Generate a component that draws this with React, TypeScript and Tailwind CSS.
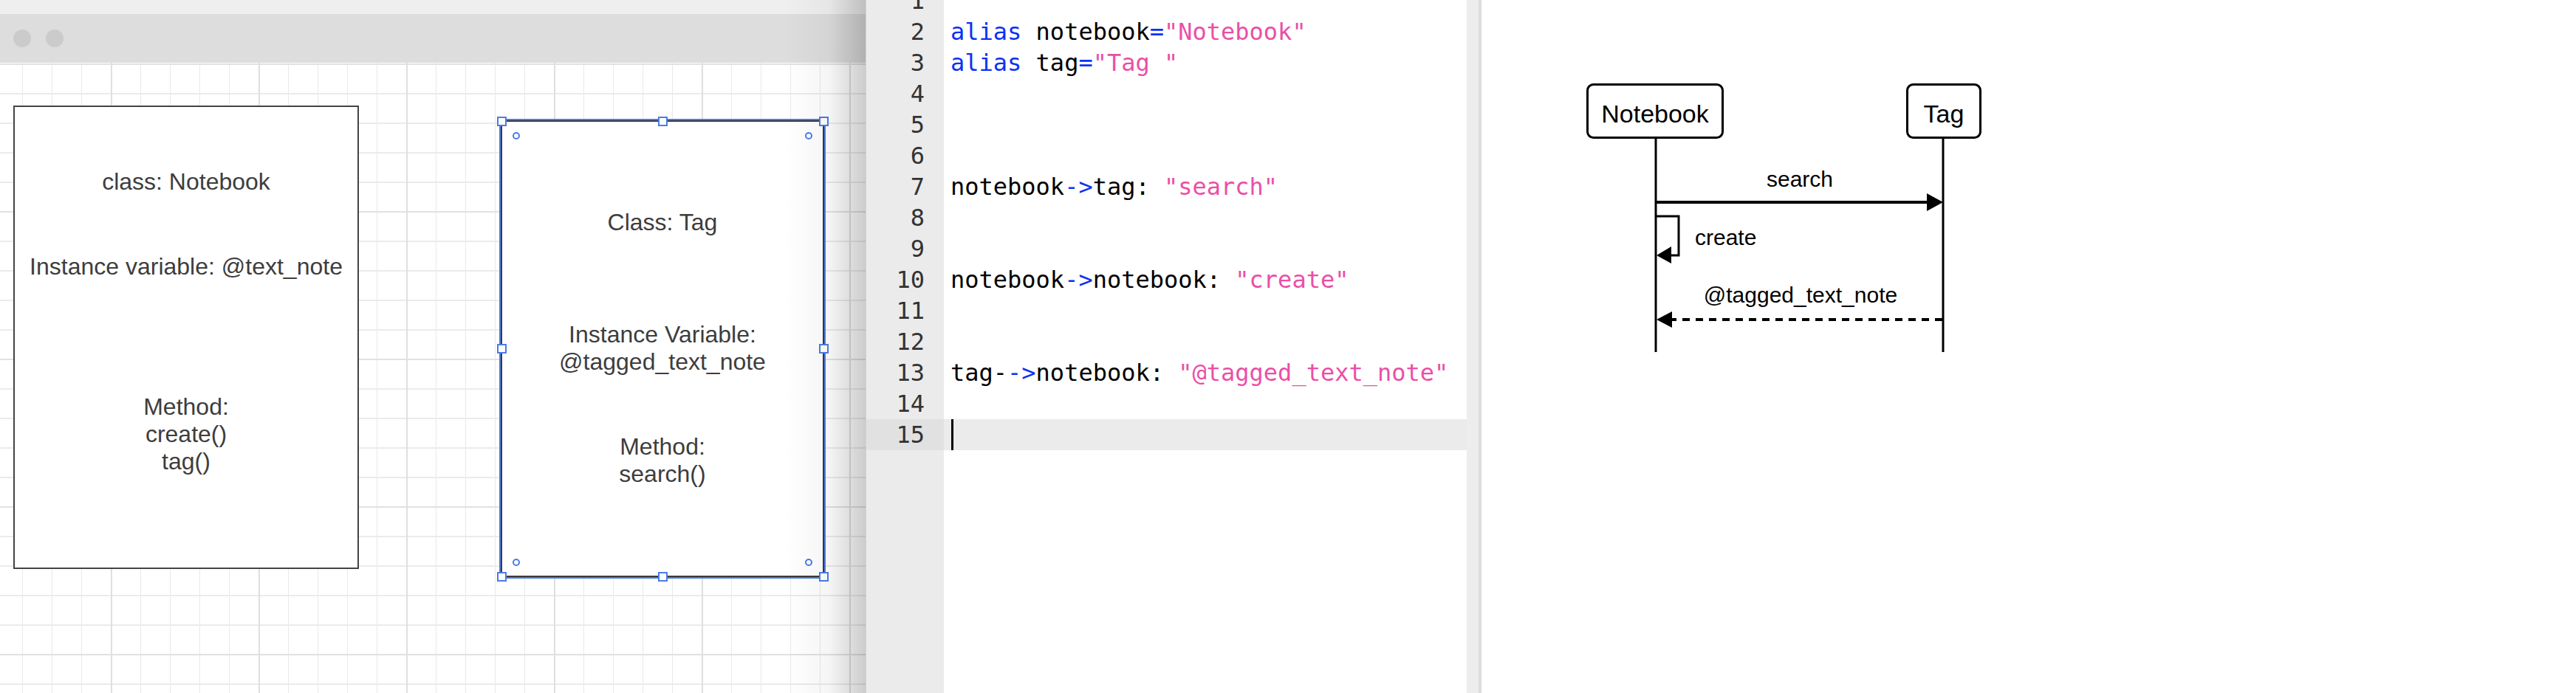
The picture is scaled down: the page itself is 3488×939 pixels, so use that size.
import React from "react";

const codeFont = "font-['DejaVu_Sans_Mono','Liberation_Mono',monospace]";
const boxFont = "font-['Liberation_Sans',Arial,sans-serif]";

// Each line is a list of [text, kind] segments
type Seg = [string, "kw" | "str" | "plain"];
const lines: Seg[][] = [
  [],
  [["alias", "kw"], [" notebook", "plain"], ["=", "kw"], ['"Notebook"', "str"]],
  [["alias", "kw"], [" tag", "plain"], ["=", "kw"], ['"Tag "', "str"]],
  [],
  [],
  [],
  [["notebook", "plain"], ["->", "kw"], ["tag: ", "plain"], ['"search"', "str"]],
  [],
  [],
  [["notebook", "plain"], ["->", "kw"], ["notebook: ", "plain"], ['"create"', "str"]],
  [],
  [],
  [["tag-", "plain"], ["->", "kw"], ["notebook: ", "plain"], ['"@tagged_text_note"', "str"]],
  [],
  [],
];

const segColor = {
  kw: "text-[#0a32f5]",
  str: "text-[#ea4fa8]",
  plain: "text-black",
};

function Handle({ className }: { className: string }) {
  return (
    <div
      className={`absolute w-[13px] h-[13px] bg-white border-2 border-[#4a7de6] ${className}`}
    />
  );
}

function Dot({ className }: { className: string }) {
  return (
    <div
      className={`absolute w-[10px] h-[10px] rounded-full border-2 border-[#4a7de6] ${className}`}
    />
  );
}

function Canvas() {
  return (
    <div className="relative flex-1 bg-white overflow-hidden">
      {/* grid */}
      <svg className="absolute inset-0 w-full h-full">
        <defs>
          <pattern id="g-minor" x="30" y="1" width="40" height="40" patternUnits="userSpaceOnUse">
            <rect x="0" y="0" width="1" height="40" fill="#e9e9e9" />
            <rect x="0" y="0" width="40" height="2" fill="#ebebeb" />
          </pattern>
          <pattern id="g-major" x="150" y="1" width="200" height="200" patternUnits="userSpaceOnUse">
            <rect x="0" y="0" width="2" height="200" fill="#dfdfdf" />
            <rect x="0" y="0" width="200" height="2" fill="#e1e1e1" />
          </pattern>
        </defs>
        <rect width="100%" height="100%" fill="url(#g-minor)" />
        <rect width="100%" height="100%" fill="url(#g-major)" />
      </svg>

      {/* class: Notebook */}
      <div
        className={`absolute left-[18px] top-[58px] w-[468px] h-[628px] bg-white border-2 border-[#444] flex flex-col items-center text-[32px] leading-[37px] text-[#3d3d3d] ${boxFont}`}
      >
        <div className="mt-[83px]">class: Notebook</div>
        <div className="mt-[78px]">Instance variable: @text_note</div>
        <div className="mt-[153px]">Method:</div>
        <div>create()</div>
        <div>tag()</div>
      </div>

      {/* Class: Tag (selected) */}
      <div
        className={`absolute left-[678px] top-[78px] w-[438px] h-[619px] bg-white border-2 border-[#3a3a3a] ring-2 ring-[#4a7de6] flex flex-col items-center text-center text-[32px] leading-[37px] text-[#3d3d3d] ${boxFont}`}
      >
        <div className="mt-[118px]">Class: Tag</div>
        <div className="mt-[115px]">Instance Variable:</div>
        <div>@tagged_text_note</div>
        <div className="mt-[78px]">Method:</div>
        <div>search()</div>
      </div>

      <Handle className="left-[673px] top-[73px]" />
      <Handle className="left-[891px] top-[73px]" />
      <Handle className="left-[1109px] top-[73px]" />
      <Handle className="left-[673px] top-[381px]" />
      <Handle className="left-[1109px] top-[381px]" />
      <Handle className="left-[673px] top-[690px]" />
      <Handle className="left-[891px] top-[690px]" />
      <Handle className="left-[1109px] top-[690px]" />
      <Dot className="left-[694px] top-[94px]" />
      <Dot className="left-[1090px] top-[94px]" />
      <Dot className="left-[694px] top-[672px]" />
      <Dot className="left-[1090px] top-[672px]" />
    </div>
  );
}

function Editor() {
  return (
    <div className={`flex h-full w-[834px] overflow-hidden ${codeFont} text-[32px]`}>
      <div className="w-[106px] h-full bg-[#ebebeb] border-l border-[#d2d2d2]">
        <div className="-mt-[20px]">
          {lines.map((_, i) => (
            <div
              key={i}
              className={`h-[42px] leading-[42px] pr-[26px] text-right text-[#333] ${
                i === 14 ? "bg-[#e1e1e1]" : ""
              }`}
            >
              {i + 1}
            </div>
          ))}
        </div>
      </div>
      <div className="w-[708px] h-full bg-white">
        <div className="-mt-[20px]">
          {lines.map((segs, i) => (
            <div
              key={i}
              className={`relative h-[42px] leading-[42px] pl-[9px] whitespace-pre ${
                i === 14 ? "bg-[#ebebeb]" : ""
              }`}
            >
              {segs.map(([t, k], j) => (
                <span key={j} className={segColor[k]}>
                  {t}
                </span>
              ))}
              {i === 14 && <span className="absolute left-[10px] top-0 w-[3px] h-[42px] bg-black" />}
            </div>
          ))}
        </div>
      </div>
      <div className="w-[16px] h-full bg-[#ededed]" />
      <div className="w-[4px] h-full bg-[#dcdcdc]" />
    </div>
  );
}

function Sequence() {
  return (
    <svg width="720" height="500" className={`block ${boxFont}`}>
      {/* participants */}
      <rect x="143.5" y="114.5" width="183" height="72" rx="8" fill="white" stroke="black" strokeWidth="3" />
      <text x="235" y="166" fontSize="34" textAnchor="middle" fill="black">
        Notebook
      </text>
      <rect x="576.5" y="114.5" width="99" height="72" rx="8" fill="white" stroke="black" strokeWidth="3" />
      <text x="626" y="166" fontSize="34" textAnchor="middle" fill="black">
        Tag
      </text>

      {/* lifelines */}
      <line x1="236" y1="188" x2="236" y2="477" stroke="black" strokeWidth="3" />
      <line x1="625" y1="188" x2="625" y2="477" stroke="black" strokeWidth="3" />

      {/* search */}
      <text x="431" y="253" fontSize="30" textAnchor="middle" fill="black">
        search
      </text>
      <line x1="236" y1="274" x2="606" y2="274" stroke="black" strokeWidth="4" />
      <polygon points="603,262 625,274 603,286" fill="black" />

      {/* create (self) */}
      <polyline points="236,293 267,293 267,346 256,346" fill="none" stroke="black" strokeWidth="3" />
      <polygon points="257,334 237,346 257,357" fill="black" />
      <text x="289" y="332" fontSize="30" fill="black">
        create
      </text>

      {/* return */}
      <text x="432" y="410" fontSize="30" textAnchor="middle" fill="black">
        @tagged_text_note
      </text>
      <line x1="624" y1="433" x2="258" y2="433" stroke="black" strokeWidth="4" strokeDasharray="10 8" />
      <polygon points="258,422 237,433 258,444" fill="black" />
    </svg>
  );
}

export default function App() {
  return (
    <div className="w-[3488px] h-[939px] flex overflow-hidden bg-white">
      {/* drawing editor */}
      <div className="relative w-[1172px] h-full flex flex-col shrink-0">
        <div className="h-[19px] bg-[#efefef]" />
        <div className="h-[66px] bg-[#dddddd] flex items-center gap-[20px] pl-[18px]">
          <div className="w-[24px] h-[24px] rounded-full bg-[#cbcbcb]" />
          <div className="w-[24px] h-[24px] rounded-full bg-[#cbcbcb]" />
        </div>
        <Canvas />
        <div className="absolute right-0 top-0 h-full w-[110px] pointer-events-none bg-[linear-gradient(to_right,rgba(0,0,0,0),rgba(0,0,0,0.04)_55%,rgba(0,0,0,0.2))]" />
      </div>

      <Editor />

      {/* rendered diagram */}
      <div className="flex-1 h-full bg-white">
        <Sequence />
      </div>
    </div>
  );
}
